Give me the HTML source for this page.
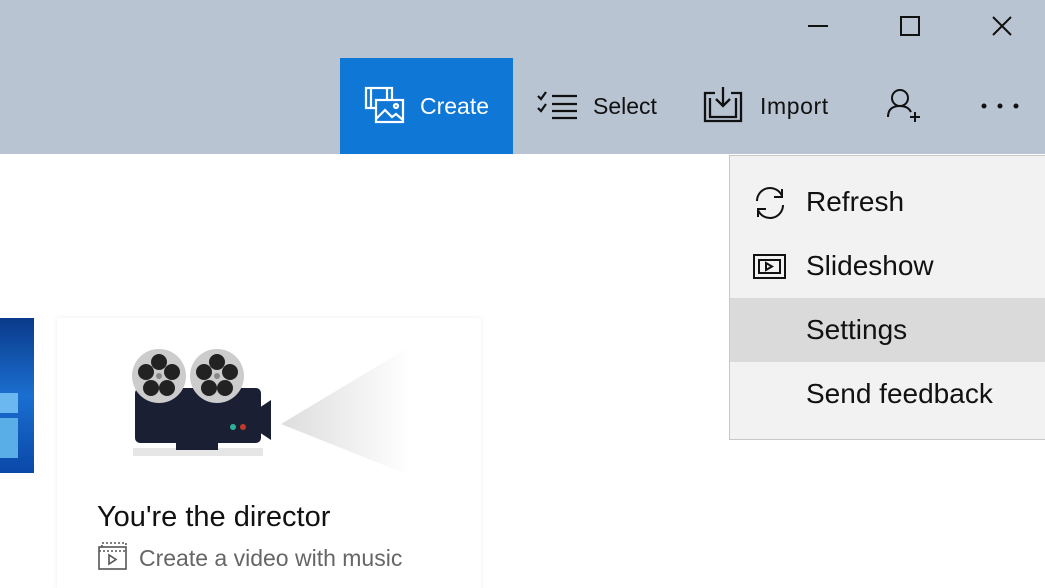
<!DOCTYPE html>
<html><head><style>
body{margin:0;width:1045px;height:575px;overflow:hidden;background:#fff;font-family:"Segoe UI","Liberation Sans",sans-serif;position:relative}
.hdr{position:absolute;left:0;top:0;width:1045px;height:154px;background:#b9c4d2}
.t{position:absolute;font-size:23px;color:#111}
.create{position:absolute;left:340px;top:58px;width:173px;height:96px;background:#0f78d7}
.menu{position:absolute;left:729px;top:155px;width:320px;height:285px;background:#f2f2f2;border:1px solid #c8c8c8;box-sizing:border-box}
.mi{position:absolute;left:76px;font-size:28px;color:#111}
.card{position:absolute;left:57px;top:318px;width:424px;height:270px;background:#fff;box-shadow:0 0 5px rgba(0,0,0,.08)}
</style></head><body>
<div class="hdr"></div>
<svg style="position:absolute;left:800px;top:10px" width="230" height="32" fill="none" stroke="#111" stroke-width="2">
<path d="M8 16H28"/><rect x="101" y="7" width="18" height="18"/><path d="M193 7L211 25M211 7L193 25"/></svg>
<div class="create"><svg style="position:absolute;left:24px;top:28px" width="42" height="40" fill="none" stroke="#fff" stroke-width="2.2"><rect x="2" y="2" width="26" height="20"/><path d="M7 2v20M23 2v20"/><rect x="12" y="14" width="27" height="22" fill="#0f78d7"/><path d="M12 33l9-9 7 7 4-3 7 6"/><circle cx="32" cy="20" r="2"/></svg>
<div class="t" style="left:80px;top:35px;color:#fff">Create</div></div>
<svg style="position:absolute;left:536px;top:90px" width="42" height="30" fill="none" stroke="#111" stroke-width="2.2"><path d="M2 6l3 3 5-7M2 18l3 3 5-7"/><path d="M16 6h25M16 14h25M16 21h25M16 28h25"/></svg>
<div class="t" style="left:593px;top:93px">Select</div>
<svg style="position:absolute;left:703px;top:85px" width="40" height="38" fill="none" stroke="#111" stroke-width="2.3"><path d="M12 8H2v28h36V8H28"/><path d="M7 13v19h26V13"/><path d="M20 2v18M13 14l7 7 7-7"/></svg>
<div class="t" style="left:760px;top:93px;letter-spacing:.6px">Import</div>
<svg style="position:absolute;left:886px;top:88px" width="36" height="36" fill="none" stroke="#111" stroke-width="2"><circle cx="14" cy="10" r="8"/><path d="M2 29c0-8 5-11 12-11 5 0 9 2 11 6"/><path d="M29 24v10M24 29h10"/></svg>
<svg style="position:absolute;left:980px;top:102px" width="40" height="8" fill="#111"><circle cx="4" cy="4" r="2.5"/><circle cx="20" cy="4" r="2.5"/><circle cx="36" cy="4" r="2.5"/></svg>
<div class="menu">
<div style="position:absolute;left:0;top:142px;width:318px;height:64px;background:#dadada"></div>
<svg style="position:absolute;left:23px;top:30px" width="34" height="34" fill="none" stroke="#111" stroke-width="2"><path d="M4 15A13 13 0 0 1 29 10M29 3v8h-8M30 19A13 13 0 0 1 5 24M5 31v-8h8"/></svg>
<div class="mi" style="top:30px">Refresh</div>
<svg style="position:absolute;left:23px;top:98px" width="34" height="26" fill="none" stroke="#111" stroke-width="2"><rect x="1" y="1" width="31" height="23"/><rect x="6" y="6" width="21" height="13"/><path d="M13 9v7l6-3.5z"/></svg>
<div class="mi" style="top:94px">Slideshow</div>
<div class="mi" style="top:158px">Settings</div>
<div class="mi" style="top:222px">Send feedback</div>
</div>
<div style="position:absolute;left:0;top:318px;width:34px;height:155px;background:linear-gradient(180deg,#0a3a8a,#1a6fd0 50%,#0a48a8)">
<div style="position:absolute;left:0;top:75px;width:18px;height:20px;background:#6bb8f0"></div><div style="position:absolute;left:0;top:100px;width:18px;height:40px;background:#5aaee8"></div></div>
<div class="card">
<svg style="position:absolute;left:74px;top:28px" width="290" height="130">
<defs><linearGradient id="g" x1="0" x2="1"><stop offset="0" stop-color="#ddd"/><stop offset="1" stop-color="#fff"/></linearGradient></defs>
<path d="M150 78L280 0V130Z" fill="url(#g)"/>
<rect x="2" y="102" width="130" height="8" fill="#e6e6e6"/>
<rect x="4" y="42" width="126" height="55" rx="5" fill="#1a1f33"/><rect x="45" y="90" width="42" height="14" fill="#1a1f33"/>
<path d="M128 62l12-8v40l-12-8z" fill="#1a1f33"/>
<circle cx="102" cy="81" r="3" fill="#2bb39a"/><circle cx="112" cy="81" r="3" fill="#c0392b"/>
<g fill="#ccc"><circle cx="28" cy="30" r="27"/><circle cx="86" cy="30" r="27"/></g>
<g fill="#222"><circle cx="28" cy="16" r="8"/><circle cx="15" cy="26" r="8"/><circle cx="41" cy="26" r="8"/><circle cx="20" cy="42" r="8"/><circle cx="36" cy="42" r="8"/><circle cx="86" cy="16" r="8"/><circle cx="73" cy="26" r="8"/><circle cx="99" cy="26" r="8"/><circle cx="78" cy="42" r="8"/><circle cx="94" cy="42" r="8"/></g>
<circle cx="28" cy="30" r="3" fill="#888"/><circle cx="86" cy="30" r="3" fill="#888"/></svg>
<div style="position:absolute;left:40px;top:183px;font-size:29px;color:#111">You're the director</div>
<svg style="position:absolute;left:40px;top:224px" width="32" height="30" fill="none" stroke="#555" stroke-width="1.6"><rect x="2" y="5" width="27" height="22"/><path d="M5 5V1h24v4M2 9h27" stroke-dasharray="2 2"/><path d="M12 13v9l7-4.5z"/></svg>
<div style="position:absolute;left:82px;top:227px;font-size:23px;color:#666">Create a video with music</div>
</div>
</body></html>
